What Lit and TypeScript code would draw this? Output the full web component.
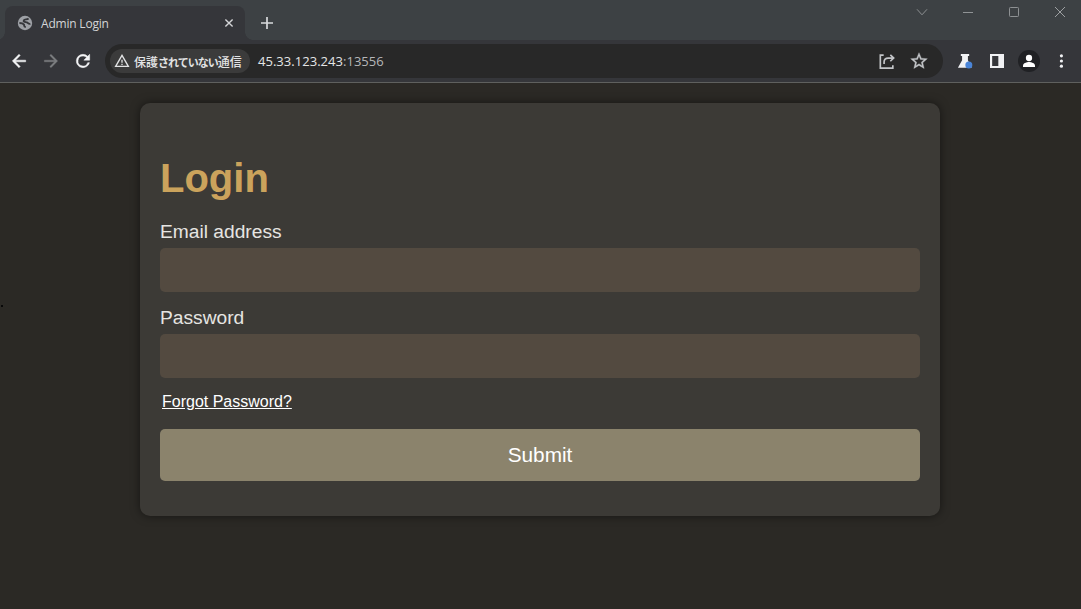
import { LitElement, html, css, svg } from "lit";
import { customElement } from "lit/decorators.js";

@customElement("browser-tabs")
class BrowserTabs extends LitElement {
  static styles = css`
    :host { display: flex; height: 40px; background: #3d4144; font-family: "Open Sans", "Noto Sans", sans-serif; box-sizing: border-box; padding-left: 5px; }
    .tab { position: relative; width: 240px; height: 34px; margin-top: 6px; background: #35363a; border-radius: 8px 8px 0 0; display: flex; align-items: center; box-sizing: border-box; padding: 0 11px 0 12px; color: #d4d5d7; }
    .tab::before, .tab::after { content: ""; position: absolute; bottom: 0; width: 8px; height: 8px; }
    .tab::before { left: -8px; background: radial-gradient(circle at 0 0, transparent 7.5px, #35363a 8px); }
    .tab::after { right: -8px; background: radial-gradient(circle at 100% 0, transparent 7.5px, #35363a 8px); }
    .title { margin-left: 8px; padding-top: 2px; font-size: 12px; line-height: 16px; flex: 1; white-space: nowrap; letter-spacing: -0.2px; }
    svg { display: block; flex: none; }
    .plus { margin: 17px 0 0 16px; }
    .controls { margin-left: auto; display: flex; gap: 34px; padding: 6px 15px 0 0; }
  `;
  render() {
    return html`
      <div class="tab">
        <svg width="16" height="16" viewBox="0 0 16 16"><circle cx="8" cy="8" r="7.2" fill="#9da0a5"/><path d="M11.600 3.600C9.800 5 7.600 3.800 6.800 5.400S8.400 7 9.800 7.400 11.200 9.400 13.400 8.800M2.400 8C4.400 8 5.800 8.200 6.800 9.400S6.200 11.800 8.800 12" fill="none" stroke="#35363a" stroke-width="1.9"/></svg>
        <span class="title">Admin Login</span>
        <svg width="10" height="10" viewBox="0 0 10 10"><path d="M1.4 1.4 8.6 8.6M8.6 1.4 1.4 8.6" stroke="#d4d5d7" stroke-width="1.4"/></svg>
      </div>
      <svg class="plus" width="12" height="12" viewBox="0 0 12 12"><path d="M6 0v12M0 6h12" stroke="#d8dadc" stroke-width="1.7"/></svg>
      <div class="controls">
        <svg width="12" height="12" viewBox="0 0 12 12"><path d="M1 3.3 6 8.8 11 3.3" fill="none" stroke="#8c8f91"/></svg>
        <svg width="12" height="12" viewBox="0 0 12 12"><path d="M1 6.5h10" stroke="#909395"/></svg>
        <svg width="12" height="12" viewBox="0 0 12 12"><rect x="1.5" y="1.5" width="9" height="9" rx=".8" fill="none" stroke="#8e9193"/></svg>
        <svg width="12" height="12" viewBox="0 0 12 12"><path d="M1 1 11 11M11 1 1 11" stroke="#9da0a2"/></svg>
      </div>`;
  }
}

const icon = (content: unknown, size = 20) =>
  html`<svg width=${size} height=${size} viewBox="0 0 24 24">${content}</svg>`;

@customElement("browser-toolbar")
class BrowserToolbar extends LitElement {
  static styles = css`
    :host { display: flex; align-items: center; height: 43px; box-sizing: border-box; background: #35363a; border-bottom: 1px solid #5f605e; padding: 0 9px; font-family: "Open Sans", "Noto Sans", sans-serif; }
    svg { display: block; flex: none; }
    .nav { display: flex; gap: 12px; color: #f4f5f6; }
    .dim { color: #7c7e81; }
    .address { display: flex; align-items: center; width: 838px; height: 34px; margin-left: 12px; background: #282828; border-radius: 17px; box-sizing: border-box; padding: 0 14px 0 5px; }
    .chip { display: flex; align-items: center; width: 140px; height: 24px; background: #3b3b3b; border-radius: 12px; box-sizing: border-box; padding-left: 4px; color: #e2e3e4; }
    .warn { font-family: "Noto Sans CJK JP", sans-serif; font-weight: 500; font-size: 12px; line-height: 16px; margin-left: 4px; padding-top: 1px; white-space: nowrap; }
    .kana { font-size: 11px; font-weight: 700; letter-spacing: -1px; }
    .url { font-size: 13px; line-height: 18px; margin-left: 8px; color: #e4e5e6; flex: 1; white-space: nowrap; letter-spacing: 0.03px; }
    .port { color: #b5b6b8; }
    .page { display: flex; gap: 12px; color: #c3c5c8; }
    .tools { display: flex; align-items: center; gap: 12px; margin-left: 12px; color: #f1f2f4; }
    .avatar { width: 22px; height: 22px; margin: 0 -1px; border-radius: 50%; background: #202124; display: grid; place-items: center; color: #fff; }
  `;
  render() {
    return html`
      <div class="nav">
        ${icon(svg`<path fill="currentColor" d="M20 11H7.83l5.59-5.59L12 4l-8 8 8 8 1.41-1.41L7.83 13H20v-2z" stroke="currentColor" stroke-width=".6"/>`)}
        <span class="dim">${icon(svg`<path fill="currentColor" d="M12 4l-1.41 1.41L16.17 11H4v2h12.17l-5.58 5.59L12 20l8-8z" stroke="currentColor" stroke-width=".4"/>`)}</span>
        ${icon(svg`<path fill="currentColor" stroke="currentColor" stroke-width=".6" d="M17.65 6.35A7.96 7.96 0 0 0 12 4a8 8 0 1 0 7.73 10h-2.08A6 6 0 1 1 12 6c1.66 0 3.14.69 4.22 1.78L13 11h7V4l-2.35 2.35z"/>`)}
      </div>
      <div class="address">
        <div class="chip">
          ${icon(svg`<path fill="currentColor" d="M12 5.5 19.8 19H4.2L12 5.5M12 1.5 0.7 21h22.6L12 1.5zM11 10v4.5h2V10h-2zm0 6v2h2v-2h-2z"/>`, 16)}
          <span class="warn">保護<span class="kana">されていない</span>通信</span>
        </div>
        <div class="url">45.33.123.243<span class="port">:13556</span></div>
        <div class="page">
          ${icon(svg`<path d="M8 5H4v15.500h15V17M8.500 15.500v-2.200c0-3.200 1.800-4.800 5-4.800H19M16 4.700l4 3.800-4 3.800" fill="none" stroke="currentColor" stroke-width="2"/>`)}
          ${icon(svg`<path fill="currentColor" stroke="currentColor" stroke-width=".4" d="M22 9.24l-7.19-.62L12 2 9.190 8.630 2 9.240l5.460 4.730L5.820 21 12 17.270 18.180 21l-1.630-7.030L22 9.240zM12 15.400l-3.760 2.270 1-4.280-3.320-2.880 4.380-.38L12 6.100l1.710 4.040 4.380.38-3.320 2.880 1 4.280L12 15.400z"/>`)}
        </div>
      </div>
      <div class="tools">
        ${icon(svg`<path fill="currentColor" d="M7 3.500h10v2.400h-1.500v5.200L20 20.200H3.500L8.500 11V5.900H7z"/><circle cx="16.600" cy="16.800" r="4.200" fill="#4a85d8"/>`)}
        ${icon(svg`<path fill="currentColor" fill-rule="evenodd" d="M3.600 3.600h16.800v16.800H3.600zM6.200 6v12h7.400V6z"/>`)}
        <div class="avatar">${icon(svg`<circle cx="12" cy="8" r="4.200" fill="currentColor"/><path fill="currentColor" d="M4 20v-2c0-3 5-4.600 8-4.600s8 1.600 8 4.600v2z"/>`, 18)}</div>
        ${icon(svg`<circle cx="12.500" cy="5.800" r="1.900" fill="currentColor"/><circle cx="12.500" cy="12" r="1.900" fill="currentColor"/><circle cx="12.500" cy="18.200" r="1.900" fill="currentColor"/>`)}
      </div>`;
  }
}

@customElement("login-form")
class LoginForm extends LitElement {
  static styles = css`
    :host { display: block; width: 800px; height: 413px; box-sizing: border-box; padding: 53px 20px 0; background: #3c3a36; border-radius: 10px; box-shadow: 0 0 10px rgba(0, 0, 0, 0.5); font-family: "Liberation Sans", Arial, sans-serif; }
    h1 { margin: 0 0 20px; font-size: 40px; line-height: 45px; color: #cba35c; }
    label { display: block; font-size: 19.2px; line-height: 22px; color: #e6e5e2; margin-bottom: 5px; }
    input { display: block; width: 100%; height: 44px; box-sizing: border-box; margin: 0 0 15px; padding: 10px; border: 0; border-radius: 5px; background: #534a40; color: #e6e5e2; font: inherit; outline: none; }
    a { display: block; width: max-content; margin-left: 2px; font-size: 16px; line-height: 18px; color: #fff; text-decoration: underline; }
    button { display: block; width: 100%; height: 52px; margin: 18px 0 0; padding: 0; border: 0; border-radius: 5px; background: #8b836c; color: #fff; font-family: inherit; font-size: 20.8px; }
  `;
  render() {
    return html`
      <h1>Login</h1>
      <label for="email">Email address</label>
      <input id="email" type="email" />
      <label for="password">Password</label>
      <input id="password" type="password" />
      <a href="#">Forgot Password?</a>
      <button type="button">Submit</button>`;
  }
}

@customElement("app-root")
class AppRoot extends LitElement {
  static styles = css`
    :host { display: flex; flex-direction: column; width: 100%; height: 100vh; overflow: hidden; background: #2b2925; }
    main { position: relative; flex: 1; display: flex; justify-content: center; align-items: flex-start; padding: 20px 1px 0 0; }
    .dot { position: absolute; left: 1px; top: 222px; width: 2px; height: 2px; background: #080808; }
  `;
  render() {
    return html`<browser-tabs></browser-tabs><browser-toolbar></browser-toolbar><main><span class="dot"></span><login-form></login-form></main>`;
  }
}
